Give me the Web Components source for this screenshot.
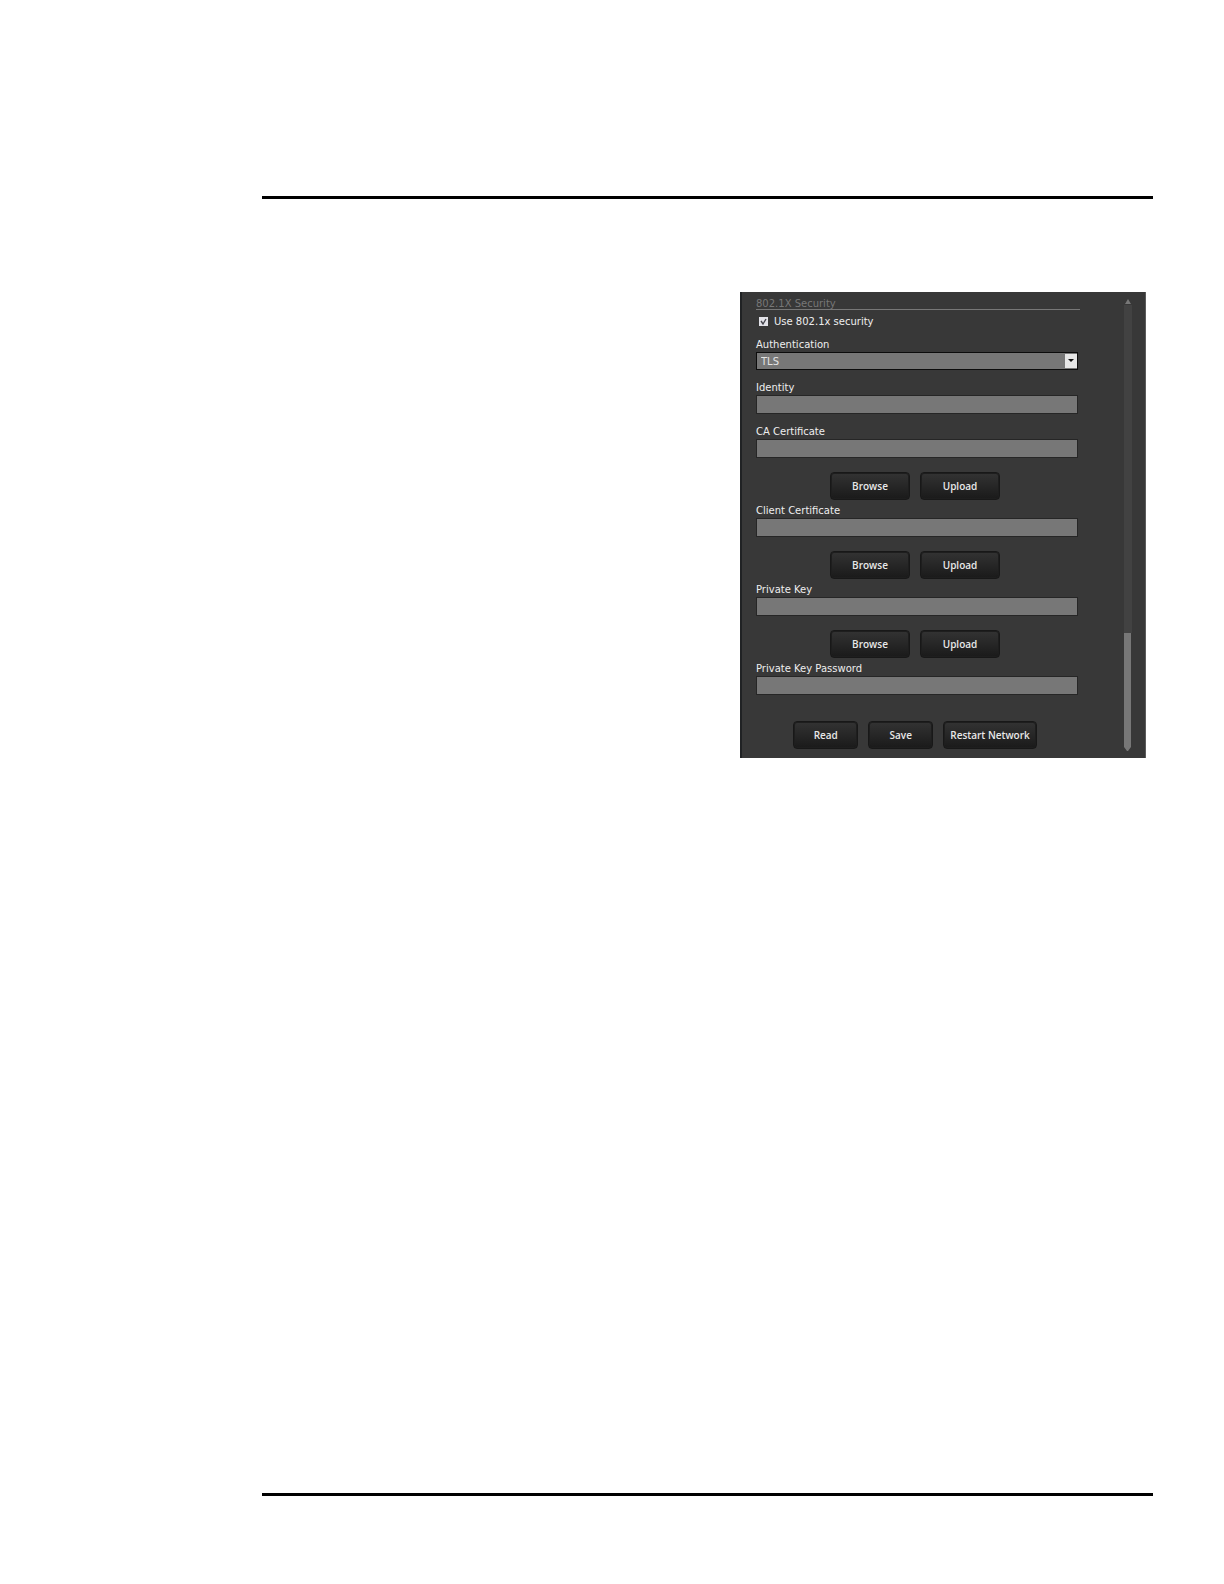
<!DOCTYPE html>
<html lang="en">
<head>
<meta charset="utf-8">
<title>802.1X Security</title>
<style>
    body {
        margin: 0;
        background: #fff;
        font-family: "DejaVu Sans", Verdana, sans-serif;
        font-size: 10px;
    }
</style>
</head>
<body>
<manual-page>
    <settings-panel>
        <section-heading>802.1X Security</section-heading>
        <check-field label="Use 802.1x security" checked></check-field>
        <select-field label="Authentication" value="TLS"></select-field>
        <text-field label="Identity"></text-field>
        <file-field label="CA Certificate"></file-field>
        <file-field label="Client Certificate"></file-field>
        <file-field label="Private Key"></file-field>
        <text-field label="Private Key Password" type="password"></text-field>
        <button-row class="actions">
            <panel-button>Read</panel-button>
            <panel-button>Save</panel-button>
            <panel-button>Restart Network</panel-button>
        </button-row>
    </settings-panel>
</manual-page>

<script>
// Shared by every labelled field
const fieldStyles = `
    :host { display: block; margin-right: 2px; }
    label {
        display: block;
        height: 13px;
        padding-top: 5px;
        line-height: 12px;
        color: #eee;
    }
    input, select {
        display: block;
        box-sizing: border-box;
        width: 100%;
        height: 19px;
        margin: 0;
        padding: 0 4px;
        border: 1px solid #262626;
        border-radius: 0;
        background: #777;
        color: #e4e4e4;
        font: inherit;
        outline: none;
    }
`;

class ManualPage extends HTMLElement {
    constructor() {
        super();
        this.attachShadow({ mode: 'open' });
    }

    connectedCallback() {
        this.shadowRoot.innerHTML = `
            <style>
                :host {
                    display: flex;
                    flex-direction: column;
                    box-sizing: border-box;
                    min-height: 100vh;
                    padding: 196px 71px 88px 262px;
                }
                hr {
                    width: 100%;
                    height: 3px;
                    margin: 0;
                    border: 0;
                    background: #000;
                }
                main {
                    display: flex;
                    flex: 1;
                    justify-content: flex-end;
                    align-items: flex-start;
                    padding: 93px 7px;
                }
            </style>
            <hr>
            <main><slot></slot></main>
            <hr>
        `;
    }
}

class SettingsPanel extends HTMLElement {
    constructor() {
        super();
        this.attachShadow({ mode: 'open' });
    }

    connectedCallback() {
        this.shadowRoot.innerHTML = `
            <style>
                :host {
                    display: grid;
                    grid-template-columns: 1fr 8px;
                    column-gap: 44px;
                    box-sizing: border-box;
                    width: 100%;
                    max-width: 406px;
                    padding: 0 13px 0 14px;
                    border-left: 2px solid #202224;
                    border-right: 1px solid #5c5c5c;
                    background: #383838;
                }
                .content { padding-bottom: 9px; }
                .scroll {
                    display: flex;
                    flex-direction: column;
                    padding: 7px 0 6px;
                }
                .track { flex: 1; background: #424242; }
                .thumb { width: 7px; height: 113px; background: #777; }
                svg { display: block; }
            </style>
            <div class="content"><slot></slot></div>
            <div class="scroll" aria-hidden="true">
                <svg width="8" height="6"><path d="M4 0 L7 5 H1 Z" fill="#777"/></svg>
                <div class="track"></div>
                <div class="thumb"></div>
                <svg width="8" height="6"><path d="M0 0 H7 V1 L4 5 H3 L0 1 Z" fill="#777"/></svg>
            </div>
        `;
    }
}

class SectionHeading extends HTMLElement {
    constructor() {
        super();
        this.attachShadow({ mode: 'open' });
    }

    connectedCallback() {
        this.shadowRoot.innerHTML = `
            <style>
                :host { display: block; }
                h2 {
                    height: 11px;
                    margin: 0;
                    padding-top: 6px;
                    border-bottom: 1px solid #777;
                    color: #777;
                    font-size: 10px;
                    font-weight: normal;
                    line-height: 12px;
                }
            </style>
            <h2><slot></slot></h2>
        `;
    }
}

class CheckField extends HTMLElement {
    constructor() {
        super();
        this.attachShadow({ mode: 'open' });
    }

    connectedCallback() {
        this.shadowRoot.innerHTML = `
            <style>
                :host { display: block; padding-bottom: 2px; }
                label {
                    display: flex;
                    align-items: center;
                    gap: 6px;
                    height: 22px;
                    padding-left: 3px;
                    color: #eee;
                }
                .box { display: grid; }
                .box > * { grid-area: 1 / 1; }
                input {
                    appearance: none;
                    width: 9px;
                    height: 9px;
                    margin: 0;
                    background: #e2e2e8;
                }
                svg { visibility: hidden; pointer-events: none; z-index: 1; }
                input:checked + svg { visibility: visible; }
            </style>
            <label>
                <span class="box">
                    <input type="checkbox" ${this.hasAttribute('checked') ? 'checked' : ''}>
                    <svg width="9" height="9"><path d="M2 4 L4 7 L7 2" fill="none" stroke="#44444c" stroke-width="1.4"/></svg>
                </span>
                ${this.getAttribute('label')}
            </label>
        `;
    }
}

class SelectField extends HTMLElement {
    constructor() {
        super();
        this.attachShadow({ mode: 'open' });
    }

    connectedCallback() {
        this.shadowRoot.innerHTML = `
            <style>
                ${fieldStyles}
                .wrap { display: grid; align-items: center; }
                .wrap > * { grid-area: 1 / 1; }
                select { appearance: none; height: 18px; border-color: #0c0c0c; }
                svg { justify-self: end; margin-right: 1px; pointer-events: none; z-index: 1; }
            </style>
            <label for="field">${this.getAttribute('label')}</label>
            <div class="wrap">
                <select id="field"><option>${this.getAttribute('value')}</option></select>
                <svg width="12" height="16">
                    <rect y="1" width="12" height="14" fill="#e6e6e6"/>
                    <path d="M3 6 H9 L6 9 Z" fill="#111"/>
                </svg>
            </div>
        `;
    }
}

class TextField extends HTMLElement {
    constructor() {
        super();
        this.attachShadow({ mode: 'open' });
    }

    connectedCallback() {
        this.shadowRoot.innerHTML = `
            <style>
                ${fieldStyles}
                :host(:not([type="password"])) { padding: 7px 0; }
            </style>
            <label for="field">${this.getAttribute('label')}</label>
            <input id="field" type="${this.getAttribute('type') || 'text'}">
        `;
    }
}

class FileField extends HTMLElement {
    constructor() {
        super();
        this.attachShadow({ mode: 'open' });
    }

    connectedCallback() {
        this.shadowRoot.innerHTML = `
            <style>
                ${fieldStyles}
                button-row { margin-top: 14px; }
                panel-button { width: 80px; }
            </style>
            <label for="field">${this.getAttribute('label')}</label>
            <input id="field" type="text">
            <button-row>
                <panel-button>Browse</panel-button>
                <panel-button>Upload</panel-button>
            </button-row>
        `;
    }
}

class ButtonRow extends HTMLElement {
    constructor() {
        super();
        this.attachShadow({ mode: 'open' });
    }

    connectedCallback() {
        this.shadowRoot.innerHTML = `
            <style>
                :host {
                    display: flex;
                    justify-content: center;
                    gap: 10px;
                    padding-right: 4px;
                }
                :host(.actions) { margin-top: 26px; padding-right: 6px; }
            </style>
            <slot></slot>
        `;
    }
}

class PanelButton extends HTMLElement {
    constructor() {
        super();
        this.attachShadow({ mode: 'open' });
    }

    connectedCallback() {
        this.shadowRoot.innerHTML = `
            <style>
                :host { display: block; min-width: 65px; }
                button {
                    display: block;
                    box-sizing: border-box;
                    width: 100%;
                    height: 28px;
                    margin: 0;
                    padding: 0 6px;
                    border: 1px solid #181818;
                    border-radius: 4px;
                    background: linear-gradient(#333, #1a1a1a);
                    box-shadow: inset 0 0 0 1px #1e1e1e;
                    color: #e8e8e8;
                    font: 600 10px "Open Sans", "Noto Sans", sans-serif;
                    white-space: nowrap;
                }
            </style>
            <button type="button"><slot></slot></button>
        `;
    }
}

customElements.define('manual-page', ManualPage);
customElements.define('settings-panel', SettingsPanel);
customElements.define('section-heading', SectionHeading);
customElements.define('check-field', CheckField);
customElements.define('select-field', SelectField);
customElements.define('text-field', TextField);
customElements.define('file-field', FileField);
customElements.define('button-row', ButtonRow);
customElements.define('panel-button', PanelButton);
</script>
</body>
</html>
